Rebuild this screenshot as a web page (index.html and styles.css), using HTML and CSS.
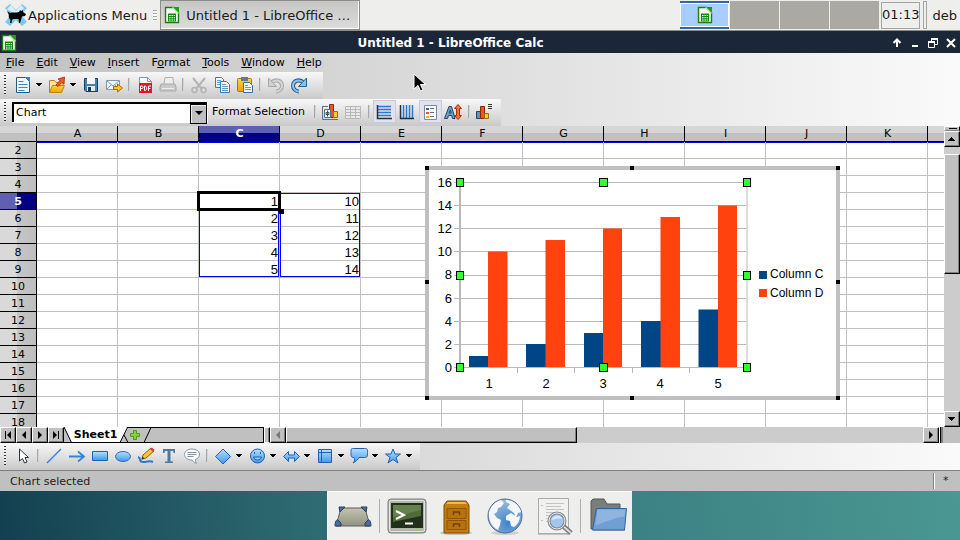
FILE: index.html
```html
<!DOCTYPE html>
<html lang="en">
<head>
<meta charset="utf-8">
<title>Untitled 1 - LibreOffice Calc</title>
<link rel="stylesheet" href="styles.css">
</head>
<body>
<svg class="defs" width="0" height="0" aria-hidden="true">
  <defs>
    <linearGradient id="sky" x1="0" y1="0" x2="0" y2="1"><stop offset="0" stop-color="#b4e0fd"/><stop offset="1" stop-color="#3f97ee"/></linearGradient>
    <linearGradient id="gold" x1="0" y1="0" x2="0" y2="1"><stop offset="0" stop-color="#ffd43c"/><stop offset="1" stop-color="#f0a010"/></linearGradient>
    <symbol id="calc" viewBox="0 0 16 18">
      <path d="M1.500 1.500h8l5 5v10h-13z" fill="#f4faf2" stroke="#1c7d18" stroke-width="1.400"/>
      <path d="M9 1h6v6z" fill="#18a303"/><path d="M8.500 1.500l6 6" stroke="#b6e5ac" stroke-width="1.500"/>
      <path d="M4 7.500h8v8H4z" fill="#168a10"/>
      <path d="M5 9h1.600v1H5zm2.400 0H9v1H7.400zM9.700 9H11v1H9.700zM5 11.200h1.600v1H5zm2.400 0H9v1H7.400zm2.300 0H11v1H9.700zM5 13.400h1.600v1H5zm2.400 0H9v1H7.400zm2.300 0H11v1H9.700z" fill="#fff"/>
    </symbol>
    <symbol id="down" viewBox="0 0 7 4"><path d="M0 0h6v1H5v1H4v1H2V2H1V1H0z" fill="#000"/></symbol>
  </defs>
</svg>

<header class="panel">
  <button class="apps-menu">
    <svg width="24" height="24" viewBox="0 0 24 24"><path d="M1 5l5-4 6 6 6-6 5 4-6 7 6 7-5 4-6-6-6 6-5-4 6-7z" fill="#7cc9ec"/><path d="M3 6l4-4 5 6 5-6 3 3-6 8z" fill="#d6f0fb"/><path d="M3 8l3 2c2-1 6 0 9-1l1-2 1 1 2-1v2l3 2-1 2-3 .5-1 3.500-1 3h-1l-.5-4h-5L8 17l-.5 3H6l.5-3L5 15c-.5-2 0-3-.5-4z" fill="#080808"/></svg>
    <span>Applications Menu</span>
  </button>
  <span class="panel-grip"></span>
  <button class="task">
    <svg width="16" height="18"><use href="#calc"/></svg>
    <span>Untitled 1 - LibreOffice …</span>
  </button>
  <div class="pager">
    <button class="desk desk-active" aria-label="Workspace 1"><svg width="16" height="18"><use href="#calc"/></svg></button>
    <button class="desk" aria-label="Workspace 2"></button>
    <button class="desk" aria-label="Workspace 3"></button>
    <button class="desk" aria-label="Workspace 4"></button>
  </div>
  <time class="clock">01:13</time>
  <span class="panel-edge"></span>
  <span class="user">deb</span>
</header>

<main class="window">
  <div class="titlebar">
    <svg class="title-icon" width="16" height="18"><use href="#calc"/></svg>
    <h1 class="title">Untitled 1 - LibreOffice Calc</h1>
    <div class="win-buttons">
      <button aria-label="Shade"><svg width="10" height="10" viewBox="0 0 10 10"><path d="M5 1v8M1.500 5L5 1.500 8.500 5" fill="none" stroke="#fff" stroke-width="2"/></svg></button>
      <button aria-label="Minimize"><svg width="10" height="10" viewBox="0 0 10 10"><path d="M2 7h6v2H2z" fill="#fff"/></svg></button>
      <button aria-label="Restore"><svg width="10" height="10" viewBox="0 0 10 10"><path d="M3.500 3V.5h6v6H7M.5 3.500h6v6h-6z" fill="none" stroke="#fff"/><path d="M3 0h7v2H3zM0 3h7v2H0z" fill="#fff"/></svg></button>
      <button aria-label="Close"><svg width="10" height="10" viewBox="0 0 10 10"><path d="M1 1l8 8M9 1L1 9" stroke="#fff" stroke-width="2"/></svg></button>
    </div>
  </div>

  <nav class="menubar">
    <button><u>F</u>ile</button><button><u>E</u>dit</button><button><u>V</u>iew</button><button><u>I</u>nsert</button><button>F<u>o</u>rmat</button><button><u>T</u>ools</button><button><u>W</u>indow</button><button><u>H</u>elp</button>
  </nav>

  <div class="toolbar toolbar-standard">
    <span class="grip"></span>
    <button class="tool" aria-label="New"><svg width="20" height="20" viewBox="0 0 20 20"><path d="M3.500 2.500h9l4 4v11h-13z" fill="#eef7fd" stroke="#1f5c86"/><path d="M12 2h5v5z" fill="#2e8ad0"/><path d="M5.500 6.500h5M5.500 9.500h9M5.500 12.500h9M5.500 15.500h6" stroke="#3b87bd"/></svg></button>
    <button class="more" aria-label="New options"><svg width="7" height="4"><use href="#down"/></svg></button>
    <button class="tool" aria-label="Open"><svg width="20" height="20" viewBox="0 0 20 20"><path d="M2.500 17.500v-12h5l1.500 2h7v3" fill="#fce79a" stroke="#c08210"/><path d="M2.500 17.500l3-7h12l-3 7z" fill="url(#gold)" stroke="#c08210"/><path d="M9 10l4-4.500-2-1.500 6.500-2-.5 7-2-1.500-4 4z" fill="#ef5b20" stroke="#a02a08" stroke-width=".8"/></svg></button>
    <button class="more" aria-label="Open options"><svg width="7" height="4"><use href="#down"/></svg></button>
    <button class="tool" aria-label="Save"><svg width="20" height="20" viewBox="0 0 20 20"><path d="M3.500 3.500h13v13H5l-1.500-1.500z" fill="#4583ae" stroke="#153f60"/><path d="M6 3h8v6H6z" fill="#f5f8fa"/><path d="M6 11h8v5H6z" fill="#dfe9ef"/><path d="M7 12h3v4H7z" fill="#153f60"/></svg></button>
    <button class="tool" aria-label="Mail"><svg width="20" height="20" viewBox="0 0 20 20"><path d="M2.500 5.500h13v9h-13z" fill="#edf5fa" stroke="#8299a8"/><path d="M3 6l6 5 6-5M3 14l4-4M15 14l-4-4" fill="none" stroke="#8299a8"/><path d="M9.500 11.500h4V9l5 4-5 4v-2.500h-4z" fill="#f8c33a" stroke="#a96c0c"/></svg></button>
    <span class="sep"></span>
    <button class="tool" aria-label="Export as PDF"><svg width="20" height="20" viewBox="0 0 20 20"><path d="M4.500 2.500h8l4 4v11h-12z" fill="#f7f9fa" stroke="#8299a8"/><path d="M12.500 2.500v4h4" fill="none" stroke="#8299a8"/><path d="M4 8h13v10H4z" fill="#e8141b"/><path d="M5.500 16v-5H7c1.500 0 1.500 2.500 0 2.500H5.500M9.500 11v4.500c3 0 3-4.500 0-4.500M13.500 16v-5H16M13.500 13.500h2" fill="none" stroke="#fff"/></svg></button>
    <button class="tool" aria-label="Print"><svg width="20" height="20" viewBox="0 0 20 20"><path d="M6 9l1-6.500h8L15.500 9" fill="#eee" stroke="#b0b0b0"/><path d="M3 9h14l1 3v4H2v-4z" fill="#c9c9c9" stroke="#a8a8a8"/><path d="M4 13.500h12" stroke="#f0f0f0"/></svg></button>
    <span class="sep"></span>
    <button class="tool" aria-label="Cut"><svg width="20" height="20" viewBox="0 0 20 20"><path d="M4 3l9 11M16 3L7 14" stroke="#b4b4b4" stroke-width="2"/><circle cx="5.500" cy="15" r="2.500" fill="none" stroke="#b4b4b4" stroke-width="1.500"/><circle cx="14.500" cy="15" r="2.500" fill="none" stroke="#b4b4b4" stroke-width="1.500"/></svg></button>
    <button class="tool" aria-label="Copy"><svg width="20" height="20" viewBox="0 0 20 20"><path d="M3.500 2.500h6l2 2v8h-8z" fill="#eef6fb" stroke="#3c7ba8"/><path d="M5 5.500h4M5 7.500h5M5 9.500h5" stroke="#5d9ac5"/><path d="M8.500 6.500h6l3 3v8h-9z" fill="#eef6fb" stroke="#3c7ba8"/><path d="M10 9.500h4M10 11.500h6M10 13.500h6M10 15.500h6" stroke="#5d9ac5"/></svg></button>
    <button class="tool" aria-label="Paste"><svg width="20" height="20" viewBox="0 0 20 20"><rect x="2.500" y="3.500" width="14" height="13" rx="1" fill="url(#gold)" stroke="#a9770c"/><path d="M6 2h7v4H6z" fill="#6c7880"/><path d="M8.500 7.500h6l3 3v7h-9z" fill="#eef6fb" stroke="#3c6d90"/><path d="M10 10.500h3M10 12.500h6M10 14.500h6" stroke="#5d9ac5"/></svg></button>
    <span class="sep"></span>
    <button class="tool" aria-label="Undo"><svg width="20" height="20" viewBox="0 0 20 20"><path d="M5 8c5-5 11-2 11 3 0 3-3 5.500-6 5.500" fill="none" stroke="#a9a9a9" stroke-width="4"/><path d="M5 8c5-5 11-2 11 3 0 3-3 5.500-6 5.500" fill="none" stroke="#d4d4d4" stroke-width="2"/><path d="M2.500 3v8.500h8z" fill="#d0d0d0" stroke="#a9a9a9"/></svg></button>
    <button class="tool" aria-label="Redo"><svg width="20" height="20" viewBox="0 0 20 20"><path d="M15 8C10 3 4 6 4 11c0 3 3 5.500 6 5.500" fill="none" stroke="#27628f" stroke-width="4"/><path d="M15 8C10 3 4 6 4 11c0 3 3 5.500 6 5.500" fill="none" stroke="#8bc3e8" stroke-width="2"/><path d="M17.500 3v8.500h-8z" fill="#8bc3e8" stroke="#27628f"/></svg></button>
  </div>

  <div class="toolbar">
    <span class="grip"></span>
    <span class="combo">
      <select id="element"><option>Chart</option></select>
    </span>
    <label class="format-label" for="element">Format Selection</label>
    <span class="sep"></span>
    <button class="tool" aria-label="Chart type"><svg width="20" height="20" viewBox="0 0 20 20"><path d="M9.500 2.500h4v13h-4z" fill="#f4521e" stroke="#8c2607"/><path d="M13.500 9.500h4v6h-4z" fill="#f8ca35" stroke="#9d6d0b"/><path d="M2.500 4v13.500H18M3 4.500h5" fill="none" stroke="#5e7180"/><path d="M4.500 7.500h6v8h-6z" fill="#eef2f4" stroke="#5e7180"/><path d="M7.500 8.500v6M6 10.500h3v2H6z" fill="none" stroke="#42515e"/></svg></button>
    <button class="tool" aria-label="Data table"><svg width="20" height="20" viewBox="0 0 20 20"><path d="M2.500 4.500h15v12h-15zM2.500 7.500h15M2.500 10.500h15M2.500 13.500h15M7.500 4.500v12M12.500 4.500v12" fill="#e9e9e9" stroke="#b8b8b8"/></svg></button>
    <span class="sep"></span>
    <button class="tool tool-on" aria-label="Horizontal grids"><svg width="20" height="20" viewBox="0 0 20 20"><path d="M4 4.500h13M4 7.500h13M4 10.500h13M4 13.500h13" stroke="#2a78cf" stroke-width="1.500"/><path d="M3.500 3v13.500H18" fill="none" stroke="#203040" stroke-width="1.500"/></svg></button>
    <button class="tool" aria-label="Vertical grids"><svg width="20" height="20" viewBox="0 0 20 20"><path d="M6.500 3v13M9.500 3v13M12.500 3v13M15.500 3v13" stroke="#2a78cf" stroke-width="1.500"/><path d="M3.500 3v13.500H17" fill="none" stroke="#203040" stroke-width="1.500"/></svg></button>
    <button class="tool tool-on" aria-label="Legend"><svg width="20" height="20" viewBox="0 0 20 20"><path d="M4.500 3.500h12v14h-12z" fill="#f8fbfd" stroke="#7b8d9c"/><path d="M6 6h3v2H6z" fill="#2f6597"/><path d="M6 10h3v2H6z" fill="#f4521e"/><path d="M6 14h3v2H6z" fill="#f0b020"/><path d="M10 6.500h4M10 10.500h4M10 14.500h4" stroke="#5e7180"/></svg></button>
    <button class="tool" aria-label="Scale text"><svg width="20" height="20" viewBox="0 0 20 20"><path d="M1.500 16.500l4.500-12h2.500l3.500 12H9.500l-.8-3H5.500l-1 3zM6 11h2.200L7.300 8z" fill="#6f9fc4" stroke="#1f466a"/><path d="M15 2.500l3.500 4h-2v7h2l-3.500 4-3.500-4h2v-7h-2z" fill="#f8703a" stroke="#a42c08"/></svg></button>
    <span class="sep"></span>
    <button class="tool" aria-label="Automatic layout"><svg width="20" height="20" viewBox="0 0 20 20"><path d="M2.500 9.500h4v7h-4z" fill="#5e93ba" stroke="#1f466a"/><path d="M6.500 4.500h4v12h-4z" fill="#f4521e" stroke="#8c2607"/><path d="M10.500 11.500h4v5h-4z" fill="#f8ca35" stroke="#9d6d0b"/><path d="M14 2.500h4M14 4.500h4M14 6.500h4" stroke="#333"/></svg></button>
  </div>

  <section class="sheet">
    <div class="cells">
      <table class="grid">
        <colgroup><col class="col-head"><col span="12"></colgroup>
        <thead>
          <tr><th></th><th>A</th><th>B</th><th class="current">C</th><th>D</th><th>E</th><th>F</th><th>G</th><th>H</th><th>I</th><th>J</th><th>K</th><th></th></tr>
        </thead>
        <tbody id="rows"></tbody>
      </table>
      <svg class="chart" width="415" height="234" viewBox="0 0 415 234" role="img" aria-label="Column chart">
        <rect x="2" y="2" width="411" height="230" fill="#fff" stroke="#c0c0c0" stroke-width="4"/>
        <path d="M29 16.500h293M29 39.500h293M29 62.500h293M29 85.500h293M29 109.500h293M29 132.500h293M29 155.500h293M29 178.500h293M29 201.500h293" stroke="#b9b9b9"/>
        <path d="M35 16v190" stroke="#b9b9b9" stroke-width="2"/>
        <path d="M322 16v190" stroke="#dcdcdc" stroke-width="2"/>
        <path d="M92.500 202v5M149.500 202v5M207.500 202v5M264.500 202v5" stroke="#b9b9b9"/>
        <path d="M44 190h19v11H44zM101 178h20v23h-20zM159 167h19v34h-19zM216 155h20v46h-20zM273.500 143.500h19.500V201h-19.500z" fill="#004586"/>
        <path d="M63 85.500h19.500V201H63zM120.500 74H140v127h-19.500zM178 62.500h19V201h-19zM235.500 51H255v150h-19.500zM293 39.500h19V201h-19z" fill="#ff420e"/>
        <path d="M334 105h8v8h-8z" fill="#004586"/><path d="M334 123h8v8h-8z" fill="#ff420e"/>
        <g class="axis-y"><text x="27" y="21">16</text><text x="27" y="44">14</text><text x="27" y="67">12</text><text x="27" y="90">10</text><text x="27" y="113">8</text><text x="27" y="137">6</text><text x="27" y="160">4</text><text x="27" y="183">2</text><text x="27" y="206">0</text></g>
        <g class="axis-x"><text x="64" y="222">1</text><text x="121" y="222">2</text><text x="178" y="222">3</text><text x="235" y="222">4</text><text x="293" y="222">5</text></g>
        <g class="legend"><text x="345" y="112">Column C</text><text x="345" y="131">Column D</text></g>
        <path d="M0 0h4v4H0zM205 0h4v4h-4zM411 0h4v4h-4zM0 114h4v4H0zM411 114h4v4h-4zM0 230h4v4H0zM205 230h4v4h-4zM411 230h4v4h-4z" fill="#000"/>
        <g class="handles"><rect x="31.500" y="12.500" width="7" height="8"/><rect x="174.500" y="12.500" width="8" height="8"/><rect x="318.500" y="12.500" width="7" height="8"/><rect x="31.500" y="105.500" width="7" height="8"/><rect x="318.500" y="105.500" width="7" height="8"/><rect x="31.500" y="197.500" width="7" height="8"/><rect x="174.500" y="197.500" width="8" height="8"/><rect x="318.500" y="197.500" width="7" height="8"/></g>
      </svg>
    </div>
    <div class="vscroll">
      <span class="split-y"></span>
      <button class="knob" aria-label="Scroll up"><svg width="8" height="4" viewBox="0 0 8 4"><path d="M3 0h1v1h1v1h1v1h1v1H0V3h1V2h1V1h1z"/></svg></button>
      <span class="thumb-y"></span>
      <button class="knob knob-end" aria-label="Scroll down"><svg width="8" height="4" viewBox="0 0 8 4"><path d="M0 0h7v1H6v1H5v1H4v1H3V3H2V2H1V1H0z"/></svg></button>
    </div>
  </section>

  <div class="tabs">
    <button class="knob" aria-label="First sheet"><svg width="8" height="8" viewBox="0 0 8 8"><path d="M1 0h1v8H1zM7 0v8L3 4z"/></svg></button>
    <button class="knob" aria-label="Previous sheet"><svg width="8" height="8" viewBox="0 0 8 8"><path d="M6 0v8L2 4z"/></svg></button>
    <button class="knob" aria-label="Next sheet"><svg width="8" height="8" viewBox="0 0 8 8"><path d="M2 0v8l4-4z"/></svg></button>
    <button class="knob" aria-label="Last sheet"><svg width="8" height="8" viewBox="0 0 8 8"><path d="M1 0v8l4-4zM6 0h1v8H6z"/></svg></button>
    <div class="tab-strip">
      <svg class="tab-lines" width="88" height="16" viewBox="0 0 88 16"><path d="M0 0h63l-7 15H7z" fill="#fff"/><path d="M0 0l7.500 15.500H56L63.500.5H88M60 8l4 7.500h16L87 .5" fill="none" stroke="#000"/></svg>
      <button class="tab">Sheet1</button>
      <button class="add-tab" aria-label="Add sheet"><svg width="12" height="12" viewBox="0 0 12 12"><path d="M4.500 1.500h3v3h3v3h-3v3h-3v-3h-3v-3h3z" fill="#86d030" stroke="#4f9a1c"/></svg></button>
    </div>
    <span class="split-x"></span>
    <div class="hscroll">
      <button class="knob knob-dim" aria-label="Scroll left"><svg width="8" height="8" viewBox="0 0 8 8"><path d="M6 0v8L2 4z"/></svg></button>
      <span class="thumb-x"></span>
      <button class="knob knob-end" aria-label="Scroll right"><svg width="8" height="8" viewBox="0 0 8 8"><path d="M2 0v8l4-4z"/></svg></button>
    </div>
    <span class="corner"></span>
  </div>

  <div class="toolbar">
    <span class="grip"></span>
    <button class="tool" aria-label="Select"><svg width="20" height="20" viewBox="0 0 20 20"><path d="M6.500 3v12l3-2.500 2 4.500 2.500-1-2-4.500h3.500z" fill="#fff" stroke="#30343a"/></svg></button>
    <span class="sep"></span>
    <button class="tool" aria-label="Line"><svg width="20" height="20" viewBox="0 0 20 20"><path d="M3 17L17 3" stroke="#3583dc" stroke-width="1.500"/></svg></button>
    <button class="tool" aria-label="Arrow"><svg width="20" height="20" viewBox="0 0 20 20"><path d="M2 10.500h14M11 5.500l6 5-6 5" fill="none" stroke="#3583dc" stroke-width="1.800"/></svg></button>
    <button class="tool" aria-label="Rectangle"><svg width="20" height="20" viewBox="0 0 20 20"><path d="M2.500 5.500h15v9h-15z" fill="url(#sky)" stroke="#1f61b4"/></svg></button>
    <button class="tool" aria-label="Ellipse"><svg width="20" height="20" viewBox="0 0 20 20"><ellipse cx="10" cy="10.500" rx="7.500" ry="5" fill="url(#sky)" stroke="#3a67a8"/></svg></button>
    <button class="tool" aria-label="Freeform"><svg width="20" height="20" viewBox="0 0 20 20"><path d="M2 11c4 1 0 5 5 5s6-2 10 0" fill="none" stroke="#2f78cc" stroke-width="2"/><path d="M6 13l1-4 8-7 3 3-8 7z" fill="#f9c733" stroke="#8a5b10"/><path d="M14 3l2-1.500L18.500 4 17 6z" fill="#e33a3a"/><path d="M5.500 13.500l1-3 2 2z" fill="#333"/></svg></button>
    <button class="tool" aria-label="Text"><svg width="20" height="20" viewBox="0 0 20 20"><path d="M4 3h12v4h-1.500L14 5h-2.500v10.500H14V17H6v-1.500h2.500V5H6l-.5 2H4z" fill="#4a7ba0"/></svg></button>
    <button class="tool" aria-label="Callout"><svg width="20" height="20" viewBox="0 0 20 20"><path d="M10 3c-10 0-10 11 0 11 1 1 2 2.500 4.500 3.500-1-1.500-1-2.500-1-4C20 11 18.500 3 10 3z" fill="#fbfcfd" stroke="#8294a4"/><path d="M5.500 6.500h9M5.500 8.500h9M5.500 10.500h6" stroke="#8294a4"/></svg></button>
    <span class="sep"></span>
    <button class="tool" aria-label="Basic shapes"><svg width="20" height="20" viewBox="0 0 20 20"><path d="M10 3l7.500 7.500L10 18l-7.500-7.500z" fill="url(#sky)" stroke="#1f61b4"/></svg></button>
    <button class="more" aria-label="Basic shapes options"><svg width="7" height="4"><use href="#down"/></svg></button>
    <button class="tool" aria-label="Symbol shapes"><svg width="20" height="20" viewBox="0 0 20 20"><circle cx="10.500" cy="10" r="7" fill="url(#sky)" stroke="#1f61b4"/><path d="M7.500 6v2M13.500 6v2M6.500 11c1 4 7 4 8 0z" fill="#8ccaf8" stroke="#1f61b4"/></svg></button>
    <button class="more" aria-label="Symbol shapes options"><svg width="7" height="4"><use href="#down"/></svg></button>
    <button class="tool" aria-label="Block arrows"><svg width="20" height="20" viewBox="0 0 20 20"><path d="M2.500 10.500l5-5V9h6V5.500l5 5-5 5V12h-6v3.500z" fill="url(#sky)" stroke="#1f61b4"/></svg></button>
    <button class="more" aria-label="Block arrows options"><svg width="7" height="4"><use href="#down"/></svg></button>
    <button class="tool" aria-label="Flowchart"><svg width="20" height="20" viewBox="0 0 20 20"><path d="M3.500 3.500h13v13h-13zM6.500 3.500v13M3.500 6.500h13" fill="url(#sky)" stroke="#1f61b4"/></svg></button>
    <button class="more" aria-label="Flowchart options"><svg width="7" height="4"><use href="#down"/></svg></button>
    <button class="tool" aria-label="Callouts"><svg width="20" height="20" viewBox="0 0 20 20"><path d="M4.500 2.500h11c3 0 3 0 3 4s0 5-3 5H10c-1 2-3 4-6 5.500 2-2 2-4 1-5.500-3 0-3-1-3-5s0-4 2.500-4z" fill="url(#sky)" stroke="#1f61b4"/></svg></button>
    <button class="more" aria-label="Callouts options"><svg width="7" height="4"><use href="#down"/></svg></button>
    <button class="tool" aria-label="Stars"><svg width="20" height="20" viewBox="0 0 20 20"><path d="M10 3l2 5h5.500L13 11.500l2 5.500-5-3.500L5 17l2-5.500L2.500 8H8z" fill="url(#sky)" stroke="#1f61b4"/></svg></button>
    <button class="more" aria-label="Stars options"><svg width="7" height="4"><use href="#down"/></svg></button>
  </div>

  <footer class="status"><span>Chart selected</span><span class="status-flag">*</span></footer>
</main>

<footer class="desktop">
  <nav class="dock">
    <button class="dock-item" aria-label="Show desktop"><svg width="40" height="40" viewBox="0 0 40 40"><defs><linearGradient id="pad" x1="0" y1="0" x2="0" y2="1"><stop offset="0" stop-color="#c3c4b2"/><stop offset="1" stop-color="#90927f"/></linearGradient></defs><path d="M8 12h24l5 18H3z" fill="url(#pad)" stroke="#5b5d52"/><path d="M6 11h6l-5 5zM34 11h-6l5 5zM2 30c0-5 2-7 3-6l3 3v3zM38 30c0-5-2-7-3-6l-3 3v3z" fill="#4d6c9e" stroke="#2b3d60"/></svg></button>
    <span class="dock-sep"></span>
    <button class="dock-item" aria-label="Terminal"><svg width="40" height="40" viewBox="0 0 40 40"><rect x="1" y="3" width="38" height="34" rx="3" fill="#b4b6b0" stroke="#7d7f7a"/><rect x="2.500" y="4.500" width="35" height="31" rx="2" fill="none" stroke="#e2e3df"/><path d="M4 7h32v25H4z" fill="#20301a"/><path d="M6 9h28v11L6 26z" fill="#506b3a"/><path d="M6 9h28v5L6 21z" fill="#66804e"/><path d="M9 15l8 4-8 4M18 27.500h8" fill="none" stroke="#fff" stroke-width="2"/><path d="M28 33h3v2h-3z" fill="#8dd83a"/></svg></button>
    <button class="dock-item" aria-label="File manager"><svg width="40" height="40" viewBox="0 0 40 40"><ellipse cx="20" cy="37" rx="16" ry="2" fill="#c2c2bf"/><path d="M8 37V9l3-4h19l3 4v28z" fill="#c47d10" stroke="#7e4d05"/><path d="M10 8l2-2h17l2 2z" fill="#f2b85a"/><path d="M11 12.500h19v10H11zM11 24.500h19v9H11z" fill="#b87310" stroke="#8c5606"/><path d="M17.500 19v-3h6v3M17.500 31v-3h6v3" fill="none" stroke="#6d4204" stroke-width="1.500"/></svg></button>
    <button class="dock-item" aria-label="Web browser"><svg width="40" height="40" viewBox="0 0 40 40"><defs><radialGradient id="sea" cx=".6" cy=".7" r=".7"><stop offset="0" stop-color="#3a83cc"/><stop offset="1" stop-color="#a3bdd8"/></radialGradient></defs><ellipse cx="20" cy="37" rx="14" ry="2" fill="#cfcfcc"/><circle cx="20" cy="20" r="17" fill="url(#sea)" stroke="#4b6795"/><path d="M4 16c2-6 6-10 12-12l3 3-3 4-3 1-1 4-3 2 3 4 4 2-1 5-2 5c-5-2-10-9-9-18zM21 4c8 0 14 6 15 12l-3 1-2 5-2-5-4-3-3-2 3-4-4-2zM21 20l5-3 6 4 3-1c0 5-3 9-6 11l-3-1-1-5-4-1z" fill="#f4f6f8"/></svg></button>
    <button class="dock-item" aria-label="Find files"><svg width="40" height="40" viewBox="0 0 40 40"><path d="M4 38h32" stroke="#c5c5c2" stroke-width="2"/><path d="M4.500 2.500h30v35h-30z" fill="#f1f1ef" stroke="#a9aba6"/><path d="M12 7.500h18M12 10.500h15M12 13.500h18M12 16.500h10M12 19.500h8M12 22.500h5M12 25.500h5M7 9.500h2M7 24.500h2" stroke="#c3c4c0"/><path d="M28 29l9 8" stroke="#74767a" stroke-width="5"/><path d="M29 30l8 7" stroke="#d9dadb" stroke-width="2"/><circle cx="23" cy="25" r="8" fill="#a5c6ec" stroke="#838994" stroke-width="3"/><circle cx="23" cy="25" r="8" fill="none" stroke="#e6e8ea"/><path d="M17.500 24a6 6 0 0 1 11-1c-4-1-7 0-11 1z" fill="#d9e8f8"/></svg></button>
    <span class="dock-sep"></span>
    <button class="dock-item" aria-label="Home folder"><svg width="40" height="40" viewBox="0 0 40 40"><path d="M3 33V5l2-2h11l3 5h13v24z" fill="#7b7d7a" stroke="#565855"/><path d="M5 34h32" stroke="#b8b8b5" stroke-width="2"/><path d="M8.500 12.500h30L36.500 34H4.500z" fill="#6f9fd3" stroke="#31629f"/><path d="M9.500 13.500h28l-1 7c-10 1-18 5-29 9z" fill="#8fb5de"/></svg></button>
  </nav>
</footer>
<svg class="pointer" width="14" height="20" viewBox="0 0 14 20"><path d="M1 1v15l4-3.500 2.500 5.500 2.500-1-2.500-5.500h5z" fill="#000" stroke="#fff"/></svg>
<script src="sheet.js"></script>
</body>
</html>
```
FILE: styles.css
```css
* { box-sizing: border-box; }
body {
  margin: 0;
  height: 100vh;
  display: flex;
  flex-direction: column;
  overflow: hidden;
  font-family: "DejaVu Sans", sans-serif;
  font-size: 11px;
  color: #000;
}
button { margin: 0; padding: 0; border: 0; background: none; font: inherit; color: inherit; }
svg { display: block; flex: none; }
.defs { position: absolute; }

/* Desktop panel */
.panel {
  flex: none;
  display: flex;
  align-items: center;
  height: 31px;
  background: #eeeeec;
  border-bottom: 1px solid #8e8e89;
  font-size: 13px;
  color: #1a1a1a;
}
.apps-menu { display: flex; align-items: center; padding-left: 4px; }
.panel-grip { width: 4px; height: 11px; margin: 0 3px 0 6px; background: repeating-linear-gradient(#a5a5a0 0 1px, #fff 1px 3px); }
.task {
  display: flex;
  align-items: center;
  gap: 6px;
  width: 200px;
  height: 30px;
  padding: 0 3px;
  border: 1px solid #8e8e89;
  box-shadow: inset -1px -1px #fff;
  background: linear-gradient(#c6c6c4, #dcdcda);
}
.pager { display: flex; gap: 1px; margin-left: auto; }
.desk { width: 49px; height: 28px; background: #aaaaa2; }
.desk-active {
  display: flex;
  align-items: center;
  justify-content: center;
  background: #a8cdff;
  border: solid #3465a4;
  border-width: 2px 0;
  box-shadow: inset 0 0 0 1px #fff;
}
.clock { margin-left: 2px; padding: 4px 0 6px; border: 1px solid #a5a59f; line-height: 15px; }
.panel-edge { width: 4px; height: 28px; margin: 0 5px 0 3px; border: 1px solid #a5a59f; }
.user { padding-right: 3px; }

/* Application window */
.window { flex: 1; min-height: 0; display: flex; flex-direction: column; background: linear-gradient(90deg, #c1c1c1, #fafafa); }
.titlebar { flex: none; display: flex; align-items: center; height: 22px; padding: 2px 4px 0 0; background: #1b2738; color: #fff; }
.title { flex: 1; margin: 0; padding-right: 8px; font-size: 12px; text-align: center; line-height: 20px; }
.title-icon { margin-left: 1px; }
.win-buttons { display: flex; gap: 8px; }

.menubar { flex: none; display: flex; height: 19px; }
.menubar button { padding: 0 6px; line-height: 18px; }

.toolbar {
  flex: none;
  align-self: flex-start;
  display: flex;
  align-items: center;
  height: 27px;
  padding: 0 5px 2px 0;
  background: linear-gradient(#f8f8f8, #c9c9c9);
}
.toolbar-standard { padding-right: 13px; }
.grip { width: 2px; height: 19px; margin: 0 5px 0 4px; background: repeating-linear-gradient(#333 0 1px, #eee 1px 3px); }
.tool { display: flex; align-items: center; justify-content: center; width: 23px; height: 23px; }
.tool-on { background: #e2e2ec; border: 1px solid #c8c8e4; }
.more { display: flex; justify-content: center; width: 11px; }
.sep { width: 2px; height: 13px; margin: 0 3px; background: #a8a8a8; border-right: 1px solid #d4d4d4; }

.combo { position: relative; margin-left: 1px; }
.combo select {
  display: block;
  appearance: none;
  width: 195px;
  height: 20px;
  padding: 0 2px;
  border: solid #000;
  border-width: 2px 0 0 2px;
  border-radius: 0;
  box-shadow: 1px 1px #fff;
  background: #fff;
  font: inherit;
  color: #000;
}
.combo::before {
  content: "";
  position: absolute;
  right: 0;
  top: 2px;
  width: 15px;
  height: 18px;
  background: #c0c0c0;
  border: 1px solid #000;
  box-shadow: inset 1px 1px #eee;
  pointer-events: none;
}
.combo::after {
  content: "";
  position: absolute;
  right: 4px;
  top: 9px;
  border: 4px solid transparent;
  border-top-color: #000;
  border-bottom: 0;
  pointer-events: none;
}
.format-label { padding: 0 6px 0 5px; }

/* Spreadsheet */
.sheet { flex: 1; min-height: 0; display: flex; }
.cells { position: relative; flex: 1; min-width: 0; overflow: hidden; background: #fff; }
.grid { width: 1009px; table-layout: fixed; border-collapse: separate; border-spacing: 0; }
.grid col { width: 81px; }
.grid .col-head { width: 37px; }
.grid th, .grid td { padding: 0; overflow: visible; }
.grid th { font-weight: 400; text-align: center; border: solid #000; border-width: 0 1px 1px 0; }
.grid thead th { height: 16px; padding-left: 1px; line-height: 15px; background: linear-gradient(#d6d6d6 0 7px, #c1c1c1 7px); }
.grid tbody th { height: 17px; padding-top: 2px; line-height: 14px; background: linear-gradient(90deg, #d9d9d9 0 17px, #c6c6c6 17px, #bebebe); }
.grid th.current { color: #fff; font-weight: 700; }
.grid thead th.current { background: linear-gradient(#6060b0 0 7px, #000080 7px); }
.grid tbody th.current { background: linear-gradient(90deg, #6060b0 0 17px, #000080 17px); }
.grid td {
  position: relative;
  height: 17px;
  padding: 2px 1px 0 0;
  border: solid #c0c0c0;
  border-width: 0 1px 1px 0;
  font: 13px/14px "Liberation Sans", sans-serif;
  text-align: right;
}
.grid tbody tr:first-child td { box-shadow: inset 0 1px #0000e8; }
.range { position: absolute; z-index: 1; left: 0; top: 0; width: 80px; height: 84px; border: 1px solid #0000e8; }
.cursor { position: absolute; z-index: 2; left: -2px; top: -2px; width: 84px; height: 20px; border: 3px solid #000; }
.cursor::after { content: ""; position: absolute; right: -6px; bottom: -6px; width: 5px; height: 5px; background: #000; }

.chart { position: absolute; left: 425px; top: 40px; }
.chart text { font: 13px "Liberation Sans", sans-serif; fill: #000; }
.axis-y text { text-anchor: end; }
.axis-x text { text-anchor: middle; }
.chart .legend text { font-size: 12px; }
.handles rect { fill: #33ff33; stroke: #000; }

/* Scroll bars */
.knob {
  flex: none;
  display: flex;
  align-items: center;
  justify-content: center;
  width: 16px;
  height: 16px;
  background: #c0c0c0;
  border: 1px solid;
  border-color: #fff #000 #000 #fff;
  box-shadow: inset -1px -1px #808080;
}
.knob-end { margin-left: auto; }
.knob-dim svg { fill: #777; }
.vscroll { flex: none; display: flex; flex-direction: column; width: 16px; background: #cccccc; }
.vscroll .knob-end { margin: auto 0 0; }
.split-y { height: 5px; background: linear-gradient(#000, #000) 4px 1px / 8px 1px no-repeat #c0c0c0; border: 1px solid; border-color: #fff #000 #808080 #fff; }
.thumb-y { height: 120px; margin-top: 7px; background: #c0c0c0; border: 1px solid; border-color: #fff #000 #000 #fff; box-shadow: inset -1px -1px #808080; }
.tabs { flex: none; display: flex; height: 16px; background: #c0c0c0; }
.tab-strip { position: relative; display: flex; align-items: center; width: 200px; border: solid #000; border-width: 1px 1px 1px 0; }
.tab-lines { position: absolute; left: 0; top: -1px; }
.tab { position: relative; width: 63px; font-weight: 700; line-height: 14px; }
.add-tab { position: relative; padding-left: 2px; }
.split-x { width: 6px; background: #c0c0c0; border: 1px solid #fff; border-right-color: #000; box-shadow: inset -1px 0 #808080; }
.hscroll { flex: 1; display: flex; background: #cccccc; }
.thumb-x { width: 291px; background: #c0c0c0; border: 1px solid; border-color: #fff #000 #000 #fff; box-shadow: inset -1px -1px #808080; }
.corner { width: 21px; background: #c0c0c0; box-shadow: inset 1px 0 #fff, inset 2px 0 #000, inset 4px 0 #808080; }

.status {
  flex: none;
  display: flex;
  align-items: center;
  justify-content: space-between;
  height: 21px;
  padding-left: 10px;
  background: #c0c0c0;
  border-top: 1px solid #808080;
  color: #222;
}
.status-flag { width: 26px; padding-left: 8px; line-height: 16px; border-left: 1px solid #fff; box-shadow: -1px 0 #808080; }

/* Desktop and dock */
.desktop { flex: none; display: flex; justify-content: center; height: 49px; padding-right: 1px; background: linear-gradient(82deg, #134050, #2e6a72 32%, #408788 75%, #4a9793); }
.dock { display: flex; align-items: center; background: #eeeeec; border: 1px solid #fff; border-right: 0; border-bottom: 0; }
.dock-item { display: flex; align-items: center; justify-content: center; width: 49px; }
.dock-sep { width: 1px; height: 34px; margin: 0 2px; background: #b0b0ab; }
.pointer { position: absolute; left: 413px; top: 73px; }
```
FILE: sheet.js
```js
// Builds rows 2-18; columns C and D hold the chart's source data.
const values = { 5: [1, 10], 6: [2, 11], 7: [3, 12], 8: [4, 13], 9: [5, 14] };
const body = document.getElementById("rows");
for (let row = 2; row <= 18; row++) {
  const tr = body.insertRow();
  const head = document.createElement("th");
  head.textContent = row;
  if (row === 5) head.className = "current";
  tr.append(head);
  for (let col = 0; col < 12; col++) {
    const cell = tr.insertCell();
    if (values[row] && (col === 2 || col === 3)) cell.textContent = values[row][col - 2];
    if (row === 5 && (col === 2 || col === 3)) cell.insertAdjacentHTML("beforeend", '<span class="range"></span>');
    if (row === 5 && col === 2) cell.insertAdjacentHTML("beforeend", '<span class="cursor"></span>');
  }
}
```
